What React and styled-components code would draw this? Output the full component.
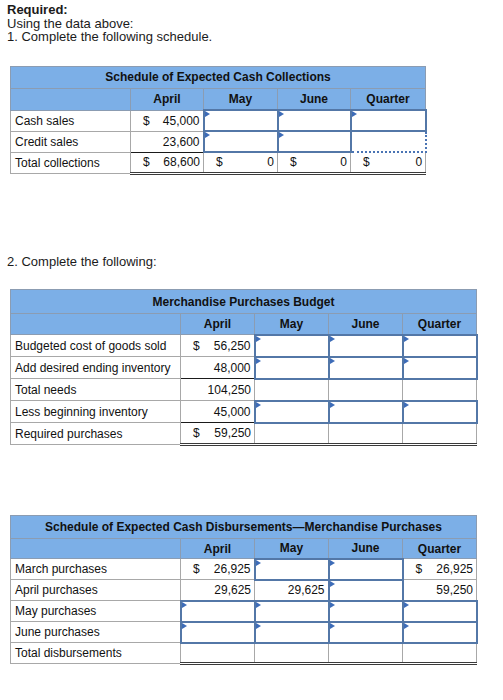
import React from 'react';
import styled, { createGlobalStyle, css } from 'styled-components';

const GlobalStyle = createGlobalStyle`
  body {
    margin: 0;
    background: #fff;
    font-family: "Liberation Sans", Arial, Helvetica, sans-serif;
    color: #1b1b1b;
  }
`;

const Page = styled.div`
  padding: 3px 7px;
`;

const Para = styled.p`
  margin: ${props => props.gap || 0}px 0 0;
  font-size: 13px;
  line-height: 13.5px;
  ${props => props.bold && css`
    font-weight: bold;
  `}
`;

const Sheet = styled.table`
  border-collapse: collapse;
  table-layout: fixed;
  width: ${props => props.width}px;
  margin: ${props => props.gap}px 0 0 3px;
  font-size: 12px;
  color: #111;
`;

const Row = styled.tr`
  height: ${props => props.h}px;
`;

const HeadCell = styled.th`
  background: #7cafe7;
  border: 1px solid #8b9cb2;
  font-weight: bold;
  text-align: center;
  padding: 0;
`;

const LabelCell = styled.td`
  border: 1px solid #a8a8a8;
  padding: 0 4px;
  text-align: left;
  white-space: nowrap;
`;

/* plain figure, optional "$" on the left */
const ValueCell = styled.td`
  border: 1px solid #a8a8a8;
  padding: 0 3px 0 12px;
  ${props => props.ruled && css`
    border-bottom: 1px solid #1a1a1a;
  `}
  ${props => props.closing && css`
    border-bottom: 3px double #3a3a3a;
  `}
`;

const Amount = styled.div`
  display: flex;
  justify-content: space-between;
`;

const InputCell = styled.td`
  position: relative;
  border: 2px solid #5377a7;
  padding: 0;
  ${props => props.dotted && css`
    border: 2px dotted #4a74b4;
  `}
  ${props => props.closing && css`
    border-bottom: 3px double #3a3a3a;
  `}
`;

const Flag = styled.span`
  position: absolute;
  left: 0;
  top: 0;
  width: 0;
  height: 0;
  border-top: 3px solid transparent;
  border-bottom: 3px solid transparent;
  border-left: 5px solid #3d6cb8;
`;

function Cell({ v, ruled, closing }) {
  if (v === 'in') {
    return <InputCell closing={closing}><Flag /></InputCell>;
  }
  if (v === 'dot') {
    return <InputCell dotted closing={closing} />;
  }
  if (v === '') {
    return <ValueCell ruled={ruled} closing={closing} />;
  }
  let dollar = v.startsWith('$');
  let num = dollar ? v.slice(1) : v;
  return (
    <ValueCell ruled={ruled} closing={closing}>
      <Amount>
        <span>{ dollar ? '$' : '' }</span>
        <span>{ num }</span>
      </Amount>
    </ValueCell>
  );
}

function Schedule({ title, widths, gap, heights, rows }) {
  let total = widths.reduce((a, b) => a + b, 0);
  return (
    <Sheet width={total} gap={gap}>
      <colgroup>
        { widths.map((w, i) => <col key={i} style={{ width: w }} />) }
      </colgroup>
      <thead>
        <Row h={heights[0]}>
          <HeadCell colSpan={5}>{ title }</HeadCell>
        </Row>
        <Row h={heights[1]}>
          <HeadCell />
          <HeadCell>April</HeadCell>
          <HeadCell>May</HeadCell>
          <HeadCell>June</HeadCell>
          <HeadCell>Quarter</HeadCell>
        </Row>
      </thead>
      <tbody>
        { rows.map((r, i) => (
          <Row key={r.label} h={heights[2]}>
            <LabelCell>{ r.label }</LabelCell>
            { r.cells.map((c, j) => (
              <Cell key={j} v={c}
                    ruled={r.ruled}
                    closing={i === rows.length - 1} />
            )) }
          </Row>
        )) }
      </tbody>
    </Sheet>
  );
}

const collections = [
  { label: 'Cash sales', cells: ['$45,000', 'in', 'in', 'in'] },
  { label: 'Credit sales', cells: ['23,600', 'in', 'in', 'dot'], ruled: true },
  { label: 'Total collections', cells: ['$68,600', '$0', '$0', '$0'] },
];

const purchases = [
  { label: 'Budgeted cost of goods sold', cells: ['$56,250', 'in', 'in', 'in'] },
  { label: 'Add desired ending inventory', cells: ['48,000', 'in', 'in', 'in'], ruled: true },
  { label: 'Total needs', cells: ['104,250', '', '', ''] },
  { label: 'Less beginning inventory', cells: ['45,000', 'in', 'in', 'in'], ruled: true },
  { label: 'Required purchases', cells: ['$59,250', '', '', ''] },
];

const disbursements = [
  { label: 'March purchases', cells: ['$26,925', 'in', 'in', '$26,925'] },
  { label: 'April purchases', cells: ['29,625', '29,625', 'in', '59,250'] },
  { label: 'May purchases', cells: ['in', 'in', 'in', 'in'] },
  { label: 'June purchases', cells: ['in', 'in', 'in', 'in'] },
  { label: 'Total disbursements', cells: ['', '', '', ''] },
];

export default function App() {
  return (
    <Page>
      <GlobalStyle />
      <Para bold>Required:</Para>
      <Para>Using the data above:</Para>
      <Para>1. Complete the following schedule.</Para>

      <Schedule title="Schedule of Expected Cash Collections"
                widths={[120, 73, 74, 73, 75]}
                gap={22}
                heights={[22, 22, 21]}
                rows={collections} />

      <Para gap={80}>2. Complete the following:</Para>

      <Schedule title="Merchandise Purchases Budget"
                widths={[170, 74, 74, 74, 74]}
                gap={21}
                heights={[24, 21, 22]}
                rows={purchases} />

      <Schedule title="Schedule of Expected Cash Disbursements—Merchandise Purchases"
                widths={[170, 74, 74, 74, 74]}
                gap={69}
                heights={[23, 20, 21]}
                rows={disbursements} />
    </Page>
  );
}
